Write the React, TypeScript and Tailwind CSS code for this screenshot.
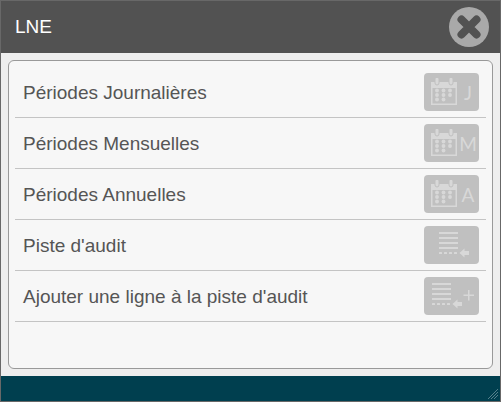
type IconKind = 'calendar' | 'list' | 'listAdd'

interface MenuEntry {
  label: string
  icon: IconKind
  letter?: string
}

const ENTRIES: MenuEntry[] = [
  { label: 'Périodes Journalières', icon: 'calendar', letter: 'J' },
  { label: 'Périodes Mensuelles', icon: 'calendar', letter: 'M' },
  { label: 'Périodes Annuelles', icon: 'calendar', letter: 'A' },
  { label: "Piste d'audit", icon: 'list' },
  { label: "Ajouter une ligne à la piste d'audit", icon: 'listAdd' },
]

function CalendarIcon() {
  return (
    <svg width="26" height="28" viewBox="0 0 26 28" fill="currentColor" aria-hidden="true">
      <path d="M0 4h26v23H0zM1.5 10v15.5h23V10z" fillRule="evenodd" />
      <rect x="4" y="-1" width="4" height="8" rx="2" stroke="#c0c0c0" />
      <rect x="18" y="-1" width="4" height="8" rx="2" stroke="#c0c0c0" />
      {[12.5, 17, 21.5].map((cy) =>
        [6, 12.5, 19].map((cx) =>
          cx === 19 && cy === 21.5 ? null : <circle key={`${cx}-${cy}`} cx={cx} cy={cy} r="1.9" />
        )
      )}
    </svg>
  )
}

function ListIcon({ add }: { add: boolean }) {
  return (
    <svg width={add ? 43 : 31} height="28" viewBox={add ? '0 0 43 28' : '0 0 31 28'} fill="currentColor" aria-hidden="true">
      {[1, 6, 11, 16].map((y) => <rect key={y} x="0" y={y} width="19" height="2" />)}
      {[0, 5, 10, 15].map((x) => <rect key={x} x={x} y="21" width="3" height="2" rx="0.5" />)}
      <path d="M20.5 22l5-4.5V20H30v4h-4.5v2.5z" />
      {add && <path d="M36 8h1.5v4.5H42V14h-4.5v4.5H36V14h-4.5v-1.5H36z" />}
    </svg>
  )
}

function EntryRow({ entry }: { entry: MenuEntry }) {
  return (
    <li className="flex items-center justify-between h-[51px] pl-2 pr-[7px] border-b border-[#c4c4c4]">
      <span className="pt-[2px] text-[19px] leading-6 text-[#555555]">{entry.label}</span>
      <button
        type="button"
        aria-label={entry.label}
        className="flex items-center w-[55px] h-[38px] shrink-0 rounded bg-[#c0c0c0] text-[#d8d8d8] cursor-pointer"
      >
        {entry.icon === 'calendar' ? (
          <>
            <span className="pl-[7px]"><CalendarIcon /></span>
            <span className="flex-1 pt-[2px] text-center font-[Lato,sans-serif] text-[19px] leading-6">
              {entry.letter}
            </span>
          </>
        ) : (
          <span className={entry.icon === 'list' ? 'pl-[15px]' : 'pl-2'}>
            <ListIcon add={entry.icon === 'listAdd'} />
          </span>
        )}
      </button>
    </li>
  )
}

export default function App() {
  return (
    <div className="flex flex-col min-h-screen border border-[#686868] bg-[#eeeeee] font-['Liberation_Sans',Arial,sans-serif]">
      <header className="flex items-center justify-between h-[52px] pl-[14px] pr-[11px] bg-[#525252]">
        <h1 className="text-[19px] leading-6 text-white">LNE</h1>
        <button type="button" aria-label="Fermer" className="cursor-pointer">
          <svg width="40" height="40" viewBox="0 0 40 40" aria-hidden="true">
            <circle cx="20" cy="20" r="20" fill="#a9a9a9" />
            <path d="M12.5 12.5l15 15M27.5 12.5l-15 15" stroke="#525252" strokeWidth="8" strokeLinecap="round" />
          </svg>
        </button>
      </header>

      <main className="flex flex-1 p-[7px]">
        <ul className="flex-1 px-[6px] pt-[6px] pb-10 rounded-md border border-[#999999] bg-[#f7f7f7]">
          {ENTRIES.map((entry) => <EntryRow key={entry.label} entry={entry} />)}
        </ul>
      </main>

      <footer className="flex items-end justify-end h-[25px] p-[2px] bg-[#003f4f]">
        <svg width="10" height="10" viewBox="0 0 10 10" fill="none" stroke="#55808b" aria-hidden="true">
          <path d="M0 10L10 0M3 10l7-7M6 10l4-4" />
        </svg>
      </footer>
    </div>
  )
}
